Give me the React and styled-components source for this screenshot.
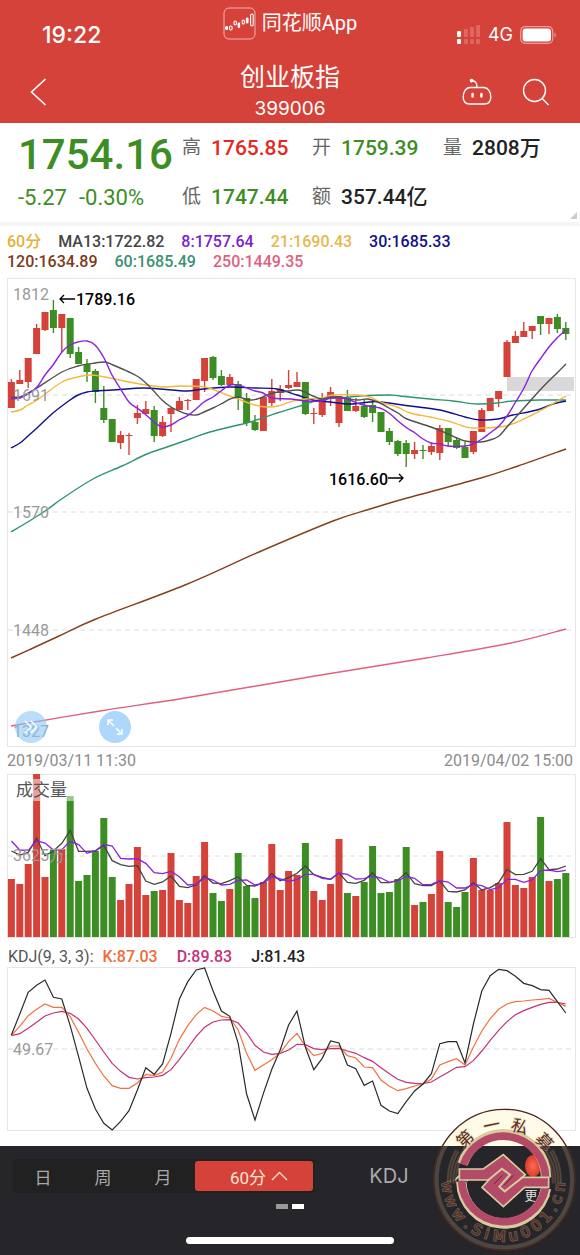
import React from 'react'
import styled, { createGlobalStyle } from 'styled-components';

const RED = '#d5423a';
const GREEN = '#3c8e24';
const STEP = 8.4;
const FIRST = 4.4;

// [body top, body bottom, wick top, wick bottom, rising]
const candles = [
  [104, 130, 101, 130, 1], [102, 106, 92, 106, 1], [80, 104, 80, 110, 1], [50, 76, 46, 76, 1],
  [34, 52, 34, 53, 1], [32, 50, 22, 55, 0], [36, 50, 36, 74, 1], [40, 76, 40, 80, 0],
  [74, 86, 69, 86, 0], [86, 94, 81, 104, 0], [93, 114, 91, 125, 0], [130, 142, 108, 145, 0],
  [141, 164, 141, 164, 0], [157, 165, 153, 171, 1], [157, 158, 155, 177, 1], [135, 140, 127, 146, 1],
  [131, 136, 123, 136, 1], [132, 158, 128, 164, 0], [144, 158, 138, 159, 1], [130, 136, 129, 154, 1],
  [123, 132, 119, 132, 1], [122, 123, 121, 132, 1], [101, 122, 101, 122, 1], [80, 103, 80, 114, 1],
  [79, 100, 78, 102, 0], [98, 107, 92, 108, 0], [99, 107, 96, 108, 1], [106, 120, 103, 132, 0],
  [120, 145, 115, 148, 0], [144, 152, 137, 153, 0], [119, 153, 119, 153, 1], [113, 125, 101, 128, 1],
  [111, 115, 107, 123, 1], [107, 110, 92, 111, 1], [104, 109, 94, 109, 1], [104, 136, 104, 137, 0],
  [135, 136, 130, 146, 1], [120, 137, 115, 139, 1], [114, 118, 109, 128, 1], [118, 145, 118, 149, 1],
  [120, 133, 112, 133, 0], [128, 133, 120, 134, 1], [128, 139, 122, 140, 0], [127, 135, 124, 144, 0],
  [134, 154, 134, 154, 0], [153, 164, 150, 167, 0], [163, 176, 162, 178, 0], [165, 176, 162, 189, 0],
  [172, 176, 164, 181, 1], [172, 173, 167, 181, 0], [168, 174, 165, 177, 1], [150, 175, 147, 182, 1],
  [150, 164, 150, 169, 0], [162, 170, 159, 171, 0], [169, 180, 164, 180, 0], [153, 174, 153, 176, 1],
  [132, 154, 130, 154, 1], [120, 133, 120, 133, 1], [113, 121, 113, 129, 1], [64, 99, 62, 99, 1],
  [58, 65, 53, 65, 1], [53, 59, 44, 59, 1], [48, 53, 48, 61, 1], [38, 46, 38, 57, 0],
  [40, 46, 40, 56, 1], [39, 51, 36, 55, 0], [50, 56, 44, 62, 0],
];

const averages = [
  { color: '#e0607e', points: [4, 448, 93, 433, 178, 420, 308, 398, 419, 380, 504, 365, 559, 351] },
  { color: '#84401c', points: [4, 380, 24, 371, 52, 358, 89, 341, 178, 307, 252, 274, 326, 243, 363, 231, 400, 220, 474, 200, 511, 188, 559, 171] },
  { color: '#2f9470', points: [4, 254, 24, 242, 41, 231, 56, 220, 86, 201, 115, 188, 140, 176, 160, 169, 183, 161, 203, 154, 243, 144, 270, 135, 296, 127, 316, 121, 333, 120, 353, 118, 383, 117, 393, 118, 423, 121, 446, 123, 470, 126, 490, 125, 506, 123, 533, 122, 559, 122] },
  { color: '#10108a', points: [4, 170, 13, 165, 21, 158, 30, 150, 46, 135, 63, 122, 71, 117, 80, 114, 88, 113, 106, 112, 136, 110, 153, 111, 180, 113, 196, 111, 223, 109, 248, 110, 270, 111, 290, 117, 306, 122, 323, 124, 343, 126, 363, 124, 373, 124, 403, 128, 433, 132, 458, 139, 473, 142, 491, 141, 506, 137, 530, 132, 546, 126, 559, 123] },
  { color: '#f3b93c', points: [4, 134, 13, 132, 21, 127, 30, 122, 55, 104, 71, 99, 83, 97, 93, 98, 122, 104, 146, 108, 160, 109, 173, 108, 198, 109, 210, 113, 223, 118, 236, 123, 248, 127, 260, 129, 271, 128, 286, 123, 298, 121, 315, 120, 326, 117, 350, 117, 363, 119, 373, 124, 390, 129, 403, 135, 423, 139, 441, 143, 456, 148, 466, 150, 492, 149, 508, 145, 525, 137, 542, 128, 559, 118] },
  { color: '#505050', points: [4, 119, 13, 119, 21, 115, 30, 110, 55, 94, 71, 88, 88, 85, 98, 84, 106, 87, 122, 94, 133, 100, 143, 109, 155, 122, 164, 129, 172, 133, 180, 136, 189, 137, 197, 134, 206, 130, 214, 126, 223, 121, 231, 119, 243, 122, 250, 121, 258, 118, 266, 115, 275, 114, 290, 112, 298, 114, 306, 118, 315, 121, 323, 119, 332, 119, 350, 122, 361, 121, 373, 125, 382, 130, 391, 135, 400, 141, 424, 149, 441, 156, 458, 163, 473, 164, 483, 162, 492, 158, 500, 149, 517, 130, 534, 111, 550, 95, 559, 86] },
  { color: '#8a20e0', points: [4, 121, 13, 120, 21, 116, 30, 109, 38, 97, 46, 87, 55, 74, 63, 67, 71, 64, 80, 63, 88, 67, 97, 80, 105, 97, 113, 110, 122, 124, 130, 130, 138, 136, 147, 144, 155, 149, 164, 147, 172, 142, 180, 138, 189, 131, 197, 124, 206, 119, 214, 113, 223, 107, 231, 107, 240, 110, 248, 113, 256, 115, 265, 120, 283, 121, 300, 123, 315, 123, 323, 120, 332, 120, 340, 121, 353, 126, 361, 128, 373, 130, 382, 135, 391, 143, 400, 150, 408, 155, 416, 161, 424, 165, 433, 166, 441, 168, 458, 168, 466, 166, 475, 161, 483, 155, 492, 148, 500, 138, 508, 125, 517, 110, 525, 93, 534, 80, 542, 69, 550, 60, 559, 52] },
];

const volumes = [
  58, 53, 73, 163, 60, 87, 88, 141, 56, 62, 86, 119, 60, 37, 53, 90, 42, 46, 47, 84, 37, 34, 61,
  95, 44, 36, 48, 84, 51, 39, 55, 93, 47, 66, 62, 94, 46, 37, 53, 98, 44, 41, 55, 91, 44, 45, 58,
  90, 32, 35, 43, 86, 35, 30, 45, 79, 47, 47, 54, 115, 52, 49, 60, 120, 56, 58, 64,
];

// series below are kept at three units per pixel
const volumeLines = [
  { color: '#444', values: [231, 243, 235, 193, 245, 231, 208, 169, 232, 232, 231, 214, 260, 272, 277, 275, 321, 331, 324, 306, 337, 341, 333, 305, 327, 329, 320, 308, 334, 336, 325, 299, 320, 311, 298, 276, 302, 310, 316, 297, 325, 328, 319, 296, 326, 326, 318, 296, 329, 335, 335, 321, 352, 354, 348, 326, 348, 341, 326, 286, 302, 301, 292, 254, 287, 285, 276] },
  { color: '#8a20e0', values: [201, 228, 229, 200, 207, 228, 227, 202, 212, 238, 230, 211, 216, 253, 255, 254, 268, 296, 299, 292, 308, 333, 331, 311, 318, 333, 331, 319, 318, 333, 328, 308, 315, 322, 317, 301, 301, 313, 316, 297, 301, 315, 314, 306, 312, 325, 321, 307, 313, 332, 331, 320, 324, 342, 342, 331, 335, 347, 341, 316, 316, 325, 318, 290, 288, 293, 289] },
];

const kdjLines = [
  { color: '#c2317a', values: [206, 200, 184, 166, 147, 138, 133, 139, 156, 184, 219, 255, 289, 313, 331, 336, 332, 330, 325, 308, 277, 243, 208, 181, 165, 159, 158, 168, 198, 235, 255, 262, 259, 249, 232, 233, 245, 248, 245, 244, 252, 259, 272, 283, 302, 320, 337, 346, 349, 350, 345, 330, 316, 301, 299, 281, 252, 220, 190, 164, 143, 131, 121, 112, 106, 106, 111] },
  { color: '#ee7340', values: [205, 178, 146, 127, 111, 121, 121, 149, 196, 246, 289, 327, 356, 364, 364, 348, 322, 326, 315, 274, 217, 176, 143, 121, 132, 148, 153, 189, 259, 310, 294, 278, 258, 224, 199, 238, 266, 259, 237, 237, 266, 273, 300, 302, 339, 358, 371, 365, 357, 350, 336, 294, 284, 275, 294, 240, 192, 155, 127, 111, 104, 102, 99, 97, 94, 106, 118] },
  { color: '#2a2a2a', values: [204, 141, 76, 55, 39, 91, 96, 176, 269, 364, 426, 469, 489, 463, 431, 369, 302, 322, 291, 199, 96, 44, 9, 3, 71, 132, 148, 229, 381, 459, 379, 307, 249, 174, 132, 241, 308, 274, 222, 228, 294, 305, 355, 342, 415, 432, 440, 404, 372, 351, 320, 230, 224, 224, 288, 171, 72, 26, 7, 11, 28, 49, 56, 68, 70, 104, 138] },
];

const smooth = (p) => {
  let d = `M${p[0]} ${p[1]}`;
  for (let i = 0; i < p.length - 2; i += 2) {
    const x0 = p[i - 2] ?? p[i];
    const y0 = p[i - 1] ?? p[i + 1];
    const x3 = p[i + 4] ?? p[i + 2];
    const y3 = p[i + 5] ?? p[i + 3];
    d += `C${p[i] + (p[i + 2] - x0) / 6} ${p[i + 1] + (p[i + 3] - y0) / 6} ${p[i + 2] - (x3 - p[i]) / 6} ${p[i + 3] - (y3 - p[i + 1]) / 6} ${p[i + 2]} ${p[i + 3]}`;
  }
  return d;
};

const zigzag = (values) => values.map((v, i) => `${FIRST + i * STEP},${v / 3}`).join(' ');

const KLine = () => (
  <Plot viewBox="0 0 569 470" role="img" aria-label="K线图">
    <Frame x="0.5" y="0.5" width="568" height="468" />
    {[117, 234, 352].map((y) => <Dash key={y} x1="1" x2="568" y1={y} y2={y} />)}
    <rect x="500" y="99" width="67" height="14" fill="#d9d9d9" />
    {candles.map(([top, bottom, high, low, up], i) => {
      const x = FIRST + i * STEP;
      const color = up ? RED : GREEN;
      return (
        <g key={i}>
          <line x1={x} x2={x} y1={high} y2={low} stroke={color} strokeWidth="1.4" />
          <rect x={x - 3.5} y={top} width="7" height={bottom - top} fill={color} />
        </g>
      );
    })}
    {averages.map(({ color, points }) => <Line key={color} d={smooth(points)} stroke={color} />)}
    <Scale x="6" y="22">1812</Scale>
    <Scale x="6" y="123">1691</Scale>
    <Scale x="6" y="240">1570</Scale>
    <Scale x="6" y="358">1448</Scale>
    <Scale x="6" y="459">1327</Scale>
    <path d="M68 21H53M57 17L53 21L57 25" fill="none" stroke="#000" strokeWidth="1.3" />
    <Mark x="69" y="27">1789.16</Mark>
    <Mark x="322" y="207">1616.60</Mark>
    <path d="M381 200H396M392 196L396 200L392 204" fill="none" stroke="#000" strokeWidth="1.3" />
  </Plot>
);

const Volume = () => (
  <Plot viewBox="0 0 569 164" role="img" aria-label="成交量">
    <Frame x="0.5" y="0.5" width="568" height="163" />
    <Dash x1="1" x2="568" y1="82" y2="82" />
    {volumes.map((h, i) => (
      <rect key={i} x={FIRST + i * STEP - 3.5} y={163 - h} width="7" height={h} fill={candles[i][4] ? RED : GREEN} />
    ))}
    <rect x="7" y="5" width="62" height="22" fill="#fff" fillOpacity="0.5" />
    {volumeLines.map(({ color, values }) => (
      <polyline key={color} points={zigzag(values)} fill="none" stroke={color} strokeWidth="1.3" />
    ))}
    <PlotTitle x="9" y="22">成交量</PlotTitle>
    <Scale x="6" y="87">3625万</Scale>
  </Plot>
);

const Kdj = () => (
  <Plot viewBox="0 0 569 164" role="img" aria-label="KDJ">
    <Frame x="0.5" y="0.5" width="568" height="163" />
    <Dash x1="1" x2="568" y1="82" y2="82" />
    <Scale x="6" y="88">49.67</Scale>
    {kdjLines.map(({ color, values }) => (
      <polyline key={color} points={zigzag(values)} fill="none" stroke={color} strokeWidth="1.2" />
    ))}
  </Plot>
);

const ringText = (chars, cx, cy, r, top) => {
  const xs = [];
  const ys = [];
  const turns = [];
  chars.forEach(([, deg, half]) => {
    const a = (deg * Math.PI) / 180;
    // deg runs clockwise from twelve for the top arc, from six for the bottom arc
    const px = top ? cx + r * Math.sin(a) : cx - r * Math.sin(a);
    const py = top ? cy - r * Math.cos(a) : cy + r * Math.cos(a);
    xs.push((px - half * Math.cos(a)).toFixed(1));
    ys.push((py - half * Math.sin(a)).toFixed(1));
    turns.push(deg);
  });
  return { x: xs.join(' '), y: ys.join(' '), rotate: turns.join(' ') };
};

const stampTop = [['第', -43, 25], ['一', -12, 25], ['私', 17, 25], ['募', 47, 25]];
const stampBottom = [
  ['w', 83, 18], ['w', 68, 18], ['w', 52, 18], ['.', 39, 7], ['S', 28, 14], ['i', 17, 6], ['M', 4, 19],
  ['u', -10, 14], ['0', -23, 14], ['0', -36, 14], ['1', -49, 14], ['.', -60, 7], ['c', -70, 12], ['n', -83, 14],
];

const Stamp = () => (
  <StampArt viewBox="36 21 435 435" role="img" aria-label="第一私募 www.SiMu001.cn">
    <g fill="none" stroke="#b5a77c" strokeOpacity="0.28">
      <circle cx="253" cy="239" r="205" strokeWidth="16" />
      <path d="M88 248A166 166 0 0 1 112 152M394 152A166 166 0 0 1 418 248" strokeWidth="14" />
      <path d="M104 250A148 148 0 0 1 134 152M372 152A148 148 0 0 1 402 250" strokeWidth="14" />
    </g>
    <path d="M68 138A211 211 0 0 1 438 138Z" fill="#fffbe8" />
    <circle cx="253" cy="239" r="211" fill="none" stroke="#4b2620" strokeWidth="4" />
    <path d="M88 248A166 166 0 0 1 118 142M388 142A166 166 0 0 1 418 248" fill="none" stroke="#4b2620" strokeWidth="3" />
    <path d="M104 250A148 148 0 0 1 134 152M372 152A148 148 0 0 1 402 250" fill="none" stroke="#4b2620" strokeWidth="3" />
    <path d="M128 192A128 128 0 0 1 378 232M378 265A128 128 0 0 1 124 245" fill="none" stroke="#d8cc9e" strokeWidth="31" />
    <path d="M130 194A127 127 0 0 1 377 234M376 265A127 127 0 0 1 125 243" fill="none" stroke="#b34a68" strokeWidth="23" />
    <path d="M118 207H190L250 164L316 224L306 232H386V262H314L250 320L186 262L206 240H118Z" fill="#b34a68" stroke="#d8cc9e" strokeWidth="5" />
    <path d="M204 241L246 206L270 224L238 260L254 274L308 232" fill="none" stroke="#d8cc9e" strokeWidth="6" />
    <path d="M222 252L248 226M252 256L280 226" fill="none" stroke="#6f2438" strokeWidth="3" />
    <StampText fontSize="50" {...ringText(stampTop, 250, 240, 150, true)}>
      {stampTop.map((c) => c[0]).join('')}
    </StampText>
    <StampText fontSize="44" {...ringText(stampBottom, 250, 240, 184, false)}>
      {stampBottom.map((c) => c[0]).join('')}
    </StampText>
  </StampArt>
);

const App = () => {
  return (
    <Page>
      <GlobalStyle />
      <Header>
        <StatusBar>
          <Time>19:22</Time>
          <AppName>
            <svg width="33" height="33" viewBox="0 0 33 33" fill="none" stroke="#fff">
              <rect x="1" y="1" width="31" height="31" rx="5" strokeOpacity="0.6" />
              <g strokeWidth="1.1">
                <rect x="2.6" y="19.5" width="2" height="3" rx="1" fill="#fff" />
                <rect x="6.5" y="19" width="2.6" height="4" rx="1.2" />
                <rect x="11" y="14" width="2.4" height="4" rx="1.2" />
                <rect x="15.2" y="16" width="1.4" height="4.4" rx=".7" fill="#fff" />
                <rect x="19.2" y="13" width="2.2" height="4" rx="1.1" />
                <rect x="23.4" y="11" width="1.6" height="5" rx=".8" fill="#fff" />
                <rect x="27.6" y="7" width="2.6" height="12" rx="1.2" />
              </g>
            </svg>
            同花顺App
          </AppName>
          <Signals>
            <svg width="24" height="20" viewBox="0 0 24 20" fill="#fff">
              <rect x="0" y="6" width="4" height="6" rx="1" />
              <rect x="0" y="14" width="4" height="5" rx="1" />
              <g opacity="0.2">
                <rect x="7" y="4" width="4" height="8" rx="1" />
                <rect x="13" y="2" width="4" height="10" rx="1" />
                <rect x="19" y="0" width="4" height="12" rx="1" />
                <rect x="7" y="14" width="4" height="5" rx="1" />
                <rect x="13" y="14" width="4" height="5" rx="1" />
                <rect x="19" y="14" width="4" height="5" rx="1" />
              </g>
            </svg>
            4G
            <svg width="37" height="18" viewBox="0 0 37 18" fill="none">
              <rect x="0.7" y="0.7" width="32" height="16.6" rx="4.5" stroke="#fff" strokeOpacity="0.5" strokeWidth="1.2" />
              <rect x="2.6" y="2.6" width="28.4" height="12.8" rx="3" fill="#fff" />
              <path d="M34.5 6.5C36 7.4 36 10.6 34.5 11.5Z" fill="#fff" fillOpacity="0.6" />
            </svg>
          </Signals>
        </StatusBar>
        <NavBar>
          <IconButton aria-label="返回">
            <svg width="17" height="30" viewBox="0 0 17 30" fill="none" stroke="#fff" strokeWidth="1.6">
              <path d="M15.5 2L1.5 15L15.5 28" />
            </svg>
          </IconButton>
          <Heading>
            <h1>创业板指</h1>
            <p>399006</p>
          </Heading>
          <Actions>
            <IconButton aria-label="助手">
              <svg width="30" height="28" viewBox="0 0 30 28" fill="none" stroke="#fff" strokeWidth="1.4">
                <path d="M8 9.5H22C26 9.5 28.8 14 28.8 19C28.8 23.5 26.5 26 22 26H8C3.5 26 1.2 23.5 1.2 19C1.2 14 4 9.5 8 9.5Z" />
                <path d="M15 9C15 5.5 13.5 3 10 2.4" />
                <circle cx="9.6" cy="2.6" r="1.2" fill="#fff" />
                <path d="M10.6 16V18.6M19.4 16V18.6" strokeWidth="2.4" strokeLinecap="round" />
              </svg>
            </IconButton>
            <IconButton aria-label="搜索">
              <svg width="28" height="28" viewBox="0 0 28 28" fill="none" stroke="#fff" strokeWidth="1.4">
                <circle cx="12.5" cy="12.5" r="11" />
                <path d="M20.2 20.4L26.5 27" />
              </svg>
            </IconButton>
          </Actions>
        </NavBar>
      </Header>

      <Quote>
        <Latest>
          <Price>1754.16</Price>
          <Change><span>-5.27</span><span>-0.30%</span></Change>
        </Latest>
        <Stats>
          <Stat $color="#e5281f"><dt>高</dt><dd>1765.85</dd></Stat>
          <Stat $color={GREEN}><dt>开</dt><dd>1759.39</dd></Stat>
          <Stat $color="#222"><dt>量</dt><dd>2808万</dd></Stat>
          <Stat $color={GREEN}><dt>低</dt><dd>1747.44</dd></Stat>
          <Stat $color="#222"><dt>额</dt><dd>357.44亿</dd></Stat>
        </Stats>
        <Corner />
      </Quote>

      <Legends>
        <Legend>
          <Value $color="#e6b03c">60分</Value>
          <Value $color="#444">MA13:1722.82</Value>
          <Value $color="#7a22d0">8:1757.64</Value>
          <Value $color="#e6b84c">21:1690.43</Value>
          <Value $color="#10108a">30:1685.33</Value>
        </Legend>
        <Legend>
          <Value $color="#7d3a1c">120:1634.89</Value>
          <Value $color="#3a9274">60:1685.49</Value>
          <Value $color="#e0607e">250:1449.35</Value>
        </Legend>
      </Legends>

      <Charts>
        <ChartBox>
          <KLine />
          <Floating>
            <RoundButton $faded aria-label="展开">
              <svg width="16" height="16" viewBox="0 0 16 16" fill="none" stroke="#fff" strokeWidth="1.4">
                <path d="M2 2L8 8L2 14M8 2L14 8L8 14" />
              </svg>
            </RoundButton>
            <RoundButton aria-label="全屏">
              <svg width="18" height="18" viewBox="0 0 18 18" fill="none" stroke="#fff" strokeWidth="1.5">
                <path d="M2 7V2H7M2 2L8 8M16 11V16H11M16 16L10 10" />
              </svg>
            </RoundButton>
          </Floating>
        </ChartBox>
        <Dates>
          <time>2019/03/11 11:30</time>
          <time>2019/04/02 15:00</time>
        </Dates>
        <Volume />
        <KdjLegend>
          <Value $color="#555">KDJ(9, 3, 3):</Value>
          <Value $color="#ee6c36">K:87.03</Value>
          <Value $color="#c2317a">D:89.83</Value>
          <Value $color="#222">J:81.43</Value>
        </KdjLegend>
        <Kdj />
      </Charts>

      <Footer>
        <Toolbar>
          <Periods>
            <Period>日</Period>
            <Period>周</Period>
            <Period>月</Period>
            <Period $active>
              60分
              <svg width="17" height="10" viewBox="0 0 17 10" fill="none" stroke="#f6d8c8" strokeWidth="1.4">
                <path d="M1 9L8.5 1.5L16 9" />
              </svg>
            </Period>
          </Periods>
          <Indicator>KDJ</Indicator>
          <More>
            <svg width="16" height="9" viewBox="0 0 16 9" fill="none" stroke="#ddd" strokeWidth="1.6">
              <path d="M1 8L8 1L15 8" />
            </svg>
            <Badge />
            更多
          </More>
        </Toolbar>
        <Pager><i /><i /></Pager>
        <HomeBar />
        <Stamp />
      </Footer>
    </Page>
  )
};

const GlobalStyle = createGlobalStyle`
*{
  box-sizing:border-box;
}
body{
  margin:0;
  background:#fff;
  font-family:Roboto, "Noto Sans CJK SC", sans-serif;
}
h1, p, dl, dd{
  margin:0;
  font-weight:400;
}
button{
  border:0;
  padding:0;
  background:none;
  font:inherit;
  cursor:pointer;
}
svg{
  display:block;
}
`
const Page = styled.main`
  width:100%;
  overflow:hidden;
`
const Header = styled.header`
  background:${RED};
  color:#fff;
`
const StatusBar = styled.div`
  display:grid;
  grid-template-columns:1fr auto 1fr;
  align-items:start;
  height:60px;
  padding-top:7px;
`
const Time = styled.time`
  padding:16px 0 0 42px;
  font:500 23px/24px Inter, sans-serif;
`
const AppName = styled.div`
  display:flex;
  align-items:center;
  gap:6px;
  font-family:Roboto, "Noto Sans CJK SC", sans-serif;
  font-size:20px;
  line-height:33px;
`
const Signals = styled.div`
  display:flex;
  align-items:center;
  justify-content:flex-end;
  gap:7px;
  padding:16px 23px 0 0;
  font:400 18px/24px Inter, sans-serif;
`
const NavBar = styled.nav`
  display:grid;
  grid-template-columns:1fr auto 1fr;
  align-items:center;
  height:63px;
  padding:0 30px;
`
const IconButton = styled.button`
  justify-self:start;
`
const Heading = styled.div`
  text-align:center;
  h1{
    font-size:25px;
    line-height:34px;
  }
  p{
    font-family:Inter, sans-serif;
    font-size:19px;
    line-height:28px;
  }
`
const Actions = styled.div`
  display:flex;
  align-items:center;
  justify-content:flex-end;
  gap:30px;
`
const Quote = styled.section`
  position:relative;
  display:grid;
  grid-template-columns:164px 1fr;
  padding:0 0 1px 18px;
  border-bottom:4px solid #f5f5f5;
  color:${GREEN};
`
const Latest = styled.div`
  padding-top:8px;
`
const Price = styled.div`
  font-size:42px;
  font-weight:500;
  line-height:48px;
`
const Change = styled.div`
  display:flex;
  gap:12px;
  font-size:22px;
  line-height:38px;
`
const Stats = styled.dl`
  display:grid;
  grid-template-columns:130px 131px 1fr;
  grid-auto-rows:49px;
  align-items:center;
`
const Stat = styled.div`
  display:flex;
  align-items:center;
  gap:10px;
  dt{
    color:#666;
    font-size:19px;
    line-height:28px;
  }
  dd{
    color:${({ $color }) => $color};
    font-size:21px;
    font-weight:500;
    line-height:28px;
    white-space:nowrap;
  }
`
const Corner = styled.i`
  position:absolute;
  right:3px;
  bottom:3px;
  border-left:7px solid transparent;
  border-bottom:7px solid #ccc;
`
const Legends = styled.div`
  padding:6px 7px;
`
const Legend = styled.div`
  display:flex;
  gap:17px;
  font-size:16px;
  line-height:20px;
`
const Value = styled.span`
  color:${({ $color }) => $color};
  font-weight:500;
  white-space:nowrap;
`
const Charts = styled.section`
  padding:0 4px 0 7px;
`
const ChartBox = styled.div`
  position:relative;
`
const Plot = styled.svg`
  width:100%;
  height:auto;
`
const Frame = styled.rect`
  fill:none;
  stroke:#e6e6e6;
`
const Dash = styled.line`
  stroke:#dcdcdc;
  stroke-dasharray:5 4;
`
const Line = styled.path`
  fill:none;
  stroke-width:1.4;
`
const Scale = styled.text`
  fill:#999;
  font-size:16px;
`
const Mark = styled.text`
  fill:#000;
  font-size:16px;
  font-weight:500;
`
const PlotTitle = styled.text`
  fill:#555;
  font-size:17px;
`
const Floating = styled.div`
  position:absolute;
  left:8px;
  bottom:5px;
  display:flex;
  gap:52px;
`
const RoundButton = styled.button`
  display:grid;
  place-items:center;
  width:32px;
  height:32px;
  border-radius:50%;
  background:${({ $faded }) => ($faded ? 'rgb(140 200 245 / 60%)' : '#aed8fb')};
`
const Dates = styled.div`
  display:flex;
  justify-content:space-between;
  padding-right:3px;
  color:#8c8c8c;
  font-size:16px;
  line-height:26px;
`
const KdjLegend = styled(Legend)`
  gap:19px;
  padding:9px 0 0 1px;
  span:first-child{
    margin-right:-10px;
    font-weight:400;
  }
`
const Footer = styled.footer`
  position:relative;
  height:109px;
  margin-top:15px;
  padding-top:13px;
  background:#25252a;
  color:#aaa;
`
const Toolbar = styled.div`
  display:grid;
  grid-template-columns:302px 148px 1fr;
  grid-template-rows:34px;
  padding-left:13px;
`
const Periods = styled.div`
  display:grid;
  grid-template-columns:repeat(3, 60px) 1fr;
  background:#212121;
`
const Period = styled.button`
  display:flex;
  align-items:center;
  justify-content:center;
  gap:5px;
  margin:2px;
  padding-left:${({ $active }) => ($active ? '10px' : '0')};
  border-radius:3px;
  background:${({ $active }) => ($active ? RED : 'none')};
  color:${({ $active }) => ($active ? '#fbe6d2' : '#aaa')};
  font-size:17px;
`
const Indicator = styled.button`
  color:#aaa;
  font-family:Inter, sans-serif;
  font-size:20px;
`
const More = styled.button`
  position:relative;
  align-self:start;
  padding:30px 0 0 32px;
  color:#ddd;
  font-size:13px;
  line-height:14px;
  svg{
    position:absolute;
    left:-10px;
    top:14px;
  }
`
const Badge = styled.i`
  position:absolute;
  right:39px;
  top:-4px;
  width:16px;
  height:22px;
  border-radius:50%;
  background:radial-gradient(#ff6a50, #c8281c);
`
const Pager = styled.div`
  display:flex;
  justify-content:center;
  gap:4px;
  padding-top:11px;
  i{
    width:12px;
    height:5px;
    background:#999;
  }
  i:last-child{
    background:#fff;
  }
`
const HomeBar = styled.div`
  width:36%;
  height:7px;
  margin:28px auto 0;
  border-radius:4px;
  background:#fff;
`
const StampArt = styled.svg`
  position:absolute;
  right:3px;
  bottom:3px;
  width:145px;
  height:145px;
`
const StampText = styled.text`
  fill:#5c2a22;
  stroke:#c9b98a;
  stroke-opacity:.4;
  stroke-width:5px;
  paint-order:stroke;
  font-family:"DejaVu Sans", "Noto Sans CJK SC", sans-serif;
`

export default App
